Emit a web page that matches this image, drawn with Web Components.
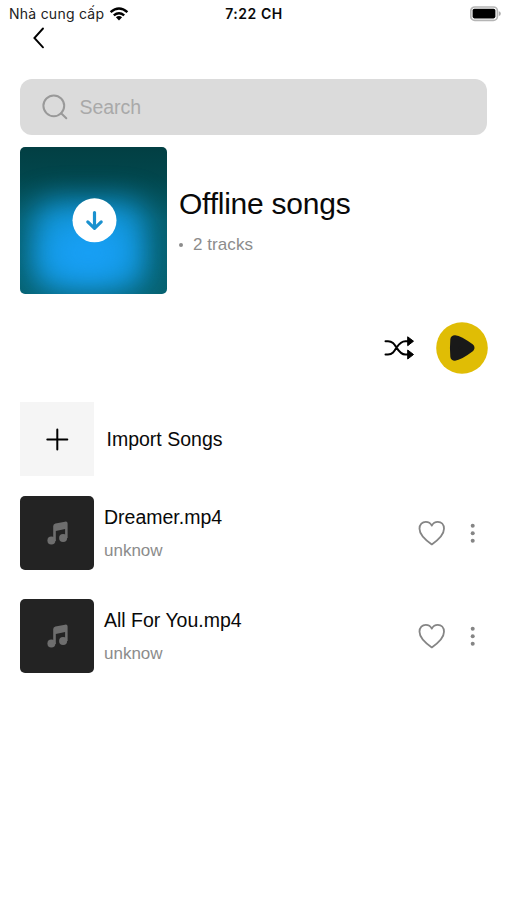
<!DOCTYPE html>
<html lang="vi">
<head>
<meta charset="utf-8">
<title>Offline songs</title>
<style>
body{margin:0;background:#fff;color:#090909;font-family:"Liberation Sans",Arial,sans-serif}
</style>
</head>
<body>
<offline-page></offline-page>
<script>
const define = (name, html) => {
  const t = document.createElement('template');
  t.innerHTML = '<style>*{box-sizing:border-box}svg{display:block;flex:none}</style>' + html;
  customElements.define(name, class extends HTMLElement {
    constructor() {
      super();
      this.attachShadow({mode: 'open'}).append(t.content.cloneNode(true));
    }
  });
};

define('status-bar', `
<style>
:host{display:grid;grid-template-columns:1fr auto 1fr;align-items:center;height:26px;padding:0 6px 0 9px;font:14px/26px Inter,"Noto Sans",sans-serif}
.left{display:flex;align-items:center;gap:5px;white-space:nowrap}
.carrier{letter-spacing:.25px;color:#222;padding-top:1px}
.time{font-weight:600;font-size:14px;letter-spacing:.55px;padding:1px 2px 0 0}
svg.batt{justify-self:end}
</style>
<div class="left"><span class="carrier">Nhà cung cấp</span>
<svg width="20" height="14" viewBox="0 0 20 14"><g fill="none" stroke="#000" stroke-width="2.5"><path d="M1.6 5.1Q10-2.1 18.4 5.1"/><path d="M4.8 8.4Q10 4.1 15.2 8.4"/></g><path d="M6.9 10.3Q10 7.9 13.1 10.3L10 13.4Z"/></svg></div>
<span class="time">7:22 CH</span>
<svg class="batt" width="31" height="16" viewBox="0 0 31 16"><rect x=".8" y="1" width="26.6" height="13.4" rx="4" fill="#fff" stroke="#b5b5b5" stroke-width="1.7"/><rect x="2.6" y="2.8" width="22.8" height="9.6" rx="1.8"/><path d="M28.8 5.3q2 .5 2 2.4t-2 2.4z" fill="#aaa"/></svg>
`);

define('back-button', `
<style>:host{display:block;height:26px;padding:1px 0 0 32px}</style>
<svg width="14" height="22" viewBox="0 0 14 22"><path d="M11 1.5 2.4 11 11 20.3" fill="none" stroke="#000" stroke-width="1.9" stroke-linecap="round"/></svg>
`);

define('search-field', `
<style>:host{display:flex;align-items:center;gap:11px;height:56px;padding-left:22px;margin-left:.4px;border-radius:12px;background:#dbdbdb;color:#a9a9a9;font-size:19.5px}</style>
<svg width="26" height="26" viewBox="0 0 26 26"><g fill="none" stroke="#999" stroke-width="2"><circle cx="11.8" cy="11.8" r="10.4"/><path d="m19.1 19.3 5.2 5" stroke-linecap="round"/></g></svg>
<slot></slot>
`);

define('download-cover', `
<style>:host{display:block;flex:none;width:147px;height:147px;border-radius:5px;overflow:hidden}</style>
<svg width="147" height="147" viewBox="0 0 147 147">
<defs>
<filter id="soft" x="-80%" y="-80%" width="260%" height="260%" color-interpolation-filters="sRGB"><feGaussianBlur stdDeviation="15"/></filter>
<linearGradient id="base" x2="0" y2="1"><stop stop-color="#023f43"/><stop offset=".2" stop-color="#02464c"/><stop offset=".5" stop-color="#055c69"/><stop offset="1" stop-color="#06616f"/></linearGradient>
</defs>
<rect width="147" height="147" fill="url(#base)"/>
<rect x="12" y="54" width="114" height="90" rx="22" fill="#1195d8" filter="url(#soft)"/>
<ellipse cx="68" cy="106" rx="42" ry="28" fill="#189ff5" filter="url(#soft)"/>
<circle cx="74.5" cy="73.3" r="22" fill="#fff"/><path d="M74.5 65.5v15.6M67.8 74.9 74.5 81.3l6.7-6.4" fill="none" stroke="#1a91cf" stroke-width="3.2" stroke-linecap="round" stroke-linejoin="round"/></svg>
`);

define('playlist-header', `
<style>
:host{display:flex;align-items:center;gap:12px}
.text{display:flex;flex-direction:column;gap:13px}
.title{font-size:30px;line-height:36px;letter-spacing:-.24px;color:#090909}
.meta{display:flex;align-items:center;gap:10px;font-size:17px;line-height:20px;color:#8c8c8c;letter-spacing:.07px}
.dot{width:4px;height:4px;border-radius:50%;background:#8c8c8c}
</style>
<download-cover></download-cover>
<div class="text"><div class="title"><slot name="title"></slot></div><div class="meta"><span class="dot"></span><slot name="meta"></slot></div></div>
`);

define('play-controls', `
<style>:host{display:flex;justify-content:flex-end;align-items:center;gap:21px}</style>
<svg width="31" height="26" viewBox="0 0 31 26"><path d="M1.5 6.2H4c4.5 0 6.2 2.8 8.5 6.4 2.6 4 4.7 6.9 8.8 6.9H25M1.5 19.5H4c4.5 0 6.2-2.9 8.5-6.9 2.6-3.8 4.7-6.4 8.8-6.4H25" fill="none" stroke="#000" stroke-width="2" stroke-linecap="round"/><path d="m23.7 1.8 5.8 4.4-5.8 4.5zM23.7 15l5.8 4.5-5.8 4.5z" stroke="#000" stroke-linejoin="round"/></svg>
<svg width="52" height="52" viewBox="0 0 52 52"><circle cx="26" cy="26" r="25.8" fill="#e0bd05"/><path d="M18.7 17.6Q23.5 18.2 34.1 25.8Q23.5 33.9 18.7 34.3Q18 26 18.7 17.6Z" fill="#191919" stroke="#191919" stroke-width="8.8" stroke-linejoin="round"/></svg>
`);

define('import-row', `
<style>
:host{display:flex;align-items:center;gap:12.5px;height:74px;font-size:19.5px}
.tile{display:grid;place-items:center;width:74px;height:74px;background:#f5f5f5}
</style>
<div class="tile"><svg width="24" height="24" viewBox="0 0 24 24"><path d="M12.3 2.5v20M2.3 12.5h20" stroke="#000" stroke-width="2" stroke-linecap="round"/></svg></div>
<slot></slot>
`);

define('song-row', `
<style>
:host{display:flex;align-items:center;height:74px}
.tile{display:grid;place-items:center;width:74px;height:74px;padding-left:2px;border-radius:5px;background:#232323}
.text{flex:1;padding-left:10px;display:flex;flex-direction:column;gap:12px}
.name{font-size:19.5px;line-height:24px}
.artist{font-size:17px;line-height:20px;color:#8c8c8c}
.more{margin:0 12px 0 25px}
</style>
<div class="tile"><svg width="22" height="24" viewBox="0 0 22 24"><g fill="#6e6e6e"><circle cx="4.4" cy="19.6" r="4"/><circle cx="16.1" cy="17.1" r="4"/><path d="M6.2 20V5.2Q6.2 3 8.4 2.5L18 .7Q20.6.2 20.6 2.6V17h-2.5V8L8.8 10V20z"/></g></svg></div>
<div class="text"><div class="name"><slot name="name"></slot></div><div class="artist"><slot name="artist"></slot></div></div>
<svg width="27" height="26" viewBox="0 0 27 26"><path d="M13.8 24.4C8.8 20.9 1.5 14.9 1.5 8.7 1.5 4.5 4.3 1.8 7.8 1.8c2.7 0 4.8 1.4 6 3.8 1.2-2.4 3.3-3.8 6-3.8 3.5 0 6.2 2.7 6.2 6.9 0 6.2-7.2 12.2-12.2 15.7Z" fill="none" stroke="#858585" stroke-width="1.8" stroke-linejoin="round"/></svg>
<svg class="more" width="5" height="20" viewBox="0 0 5 20"><g fill="#858585"><circle cx="2.7" cy="2.7" r="2"/><circle cx="2.7" cy="10.2" r="2"/><circle cx="2.7" cy="17.7" r="2"/></g></svg>
`);

define('offline-page', `
<style>
*{box-sizing:border-box}
:host{display:block;min-height:900px;background:#fff}
main{display:flex;flex-direction:column;padding:27px 20px 0 20px}
playlist-header{margin-top:12px}
play-controls{margin:28px -.6px 0 0}
import-row{margin-top:28px}
.songs{display:flex;flex-direction:column;gap:28.5px;margin-top:20px}
</style>
<status-bar></status-bar>
<back-button></back-button>
<main>
<search-field>Search</search-field>
<playlist-header><span slot="title">Offline songs</span><span slot="meta">2 tracks</span></playlist-header>
<play-controls></play-controls>
<import-row>Import Songs</import-row>
<div class="songs">
<song-row><span slot="name">Dreamer.mp4</span><span slot="artist">unknow</span></song-row>
<song-row><span slot="name">All For You.mp4</span><span slot="artist">unknow</span></song-row>
</div>
</main>
`);
</script>
</body>
</html>
